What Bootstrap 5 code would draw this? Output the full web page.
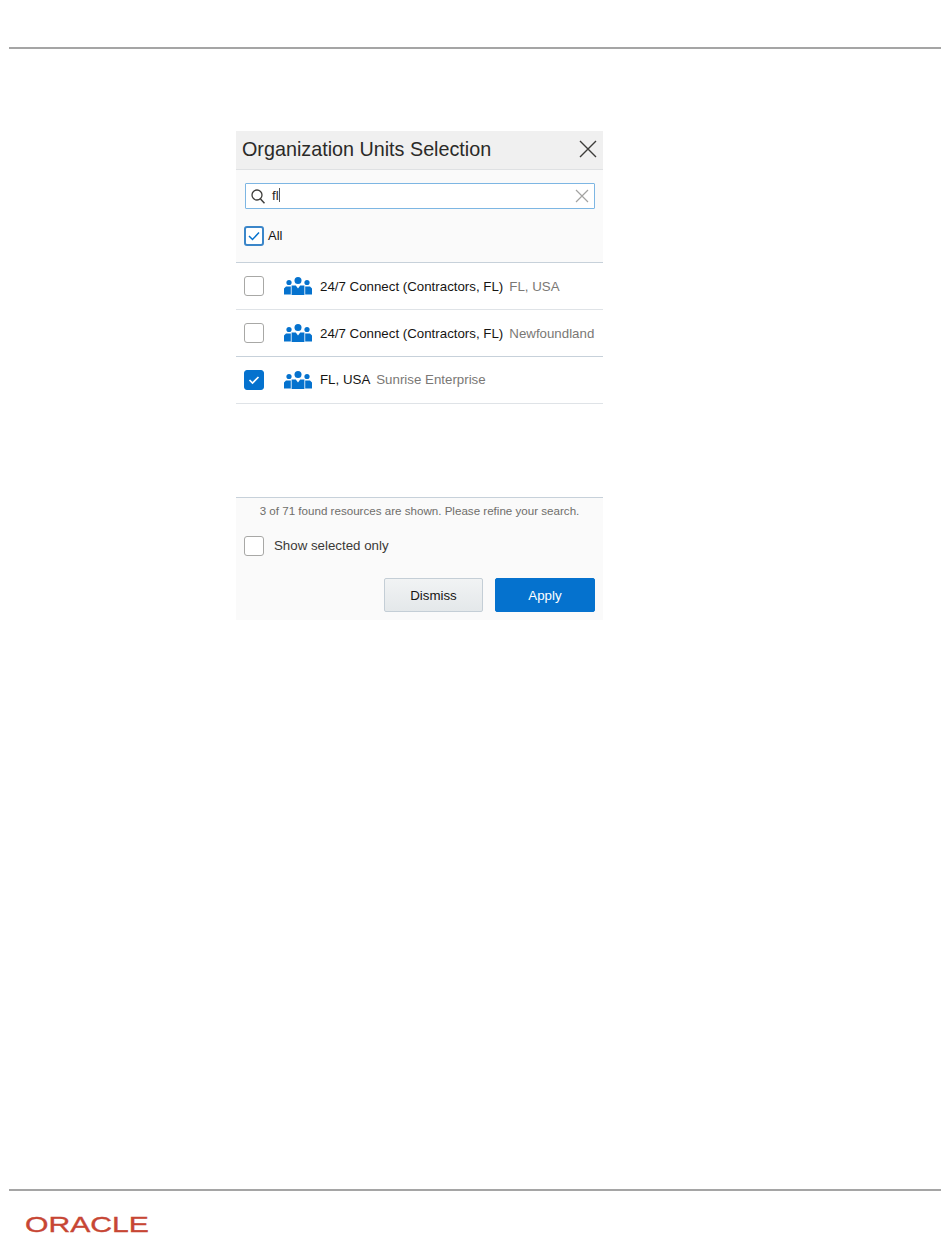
<!DOCTYPE html>
<html lang="en">
<head>
<meta charset="utf-8">
<title>Organization Units Selection</title>
<link href="https://cdn.jsdelivr.net/npm/bootstrap@5.3.0/dist/css/bootstrap.min.css" rel="stylesheet">
<style>
body{background:#fff;font-family:"Liberation Sans",Arial,sans-serif;color:#161513;height:1260px;overflow:hidden}
.pg{height:1260px;padding:47px 9px 0;display:flex;flex-direction:column}
.rule{height:2px;background:#a5a5a5;flex:none}
.pgmain{flex:none;height:1140px;padding:82px 0 0 227px}
.dlg{width:367px;height:489px;background:#fafafa;display:flex;flex-direction:column}
.dlghead{height:39px;background:#f0f0f0;border-bottom:1px solid #dfe1e3;padding:0 6px 2px;display:flex;align-items:center;justify-content:space-between;flex:none}
.dlgtitle{font-size:19.75px;color:#2b2a28;margin:0;font-weight:400;line-height:36px}
.srch{margin:13px 8px 0 9px;height:26px;border:1px solid #7db6e3;border-radius:1px;background:#fff;display:flex;align-items:center;padding:0 5px;flex:none}
.srchval{font-size:13.3px;flex:1;margin-left:7px;line-height:18px;color:#2b2a28}
.caret{display:inline-block;width:1px;height:14px;background:#555;vertical-align:-2px}
.chk{width:20px;height:20px;border:1px solid #a8a8a6;border-radius:3px;background:#fff;flex:none;display:flex;align-items:center;justify-content:center}
.chk-on{background:#0572ce;border-color:#0572ce}
.chk-foc{border:2px solid #3b86c9;background:#fff}
.allrow{margin:17px 0 0 8px;height:20px;display:flex;align-items:center;font-size:13px;gap:4px;flex:none;color:#161513}
.lst{margin-top:16px;border-top:1px solid #c7d1da;background:#fff;height:235px;flex:none}
.lrow{height:47px;display:flex;align-items:center;padding-left:8px;border-bottom:1px solid #dfe3e7;font-size:13.3px;white-space:nowrap}
.lrow.dark{border-bottom-color:#c7d1da}
.lrow svg.grp{margin-left:20px;margin-right:8px;flex:none}
.lbl-low{padding-top:1px}
.sub{color:#7a7875;margin-left:6px}
.foot{border-top:1px solid #c7d1da;flex:1;display:flex;flex-direction:column}
.found{font-size:11.6px;color:#6f6e6b;text-align:center;line-height:14px;margin-top:6px}
.selrow{margin:18px 0 0 8px;height:20px;display:flex;align-items:center;gap:10px;font-size:13.3px;color:#3a3937}
.acts{margin:22px 8px 0 0;display:flex;justify-content:flex-end;gap:12px}
.bt{height:34px;width:100px;border-radius:2px;font-size:13.3px;padding:1px 0 0;line-height:32px;font-family:inherit}
.bt-dis{background:linear-gradient(#f1f3f4,#e4e8ea);border:1px solid #c4ced6;color:#161513;width:99px}
.bt-app{background:#0572ce;border:1px solid #0572ce;color:#fff}
.brand{padding:20px 0 0 16px}
.brand svg{display:block}
</style>
</head>
<body>
<svg width="0" height="0" class="d-block position-absolute"><defs>
<symbol id="grp" viewBox="0 0 28 18">
<circle cx="14" cy="3.500" r="3.500" fill="#0572ce"/><circle cx="5" cy="5.500" r="2.600" fill="#0572ce"/><circle cx="23" cy="5.500" r="2.600" fill="#0572ce"/>
<path fill="#0572ce" d="M0 11.500 2 9.500h4.800v8H0zM28 11.500 26 9.500h-4.800v8H28zM7.600 8.500h4.200l2.200 3 2.200-3h4.200V18H7.600z"/>
</symbol></defs></svg>
<div class="pg">
<div class="rule"></div>
<div class="pgmain">
<div class="dlg">
<div class="dlghead">
<h1 class="dlgtitle">Organization Units Selection</h1>
<svg width="18" height="18" viewBox="0 0 18 18"><path d="M1 1l16 16M17 1L1 17" stroke="#3d3c3a" stroke-width="1.400" fill="none"/></svg>
</div>
<div class="srch">
<svg width="14" height="15" viewBox="0 0 14 15"><circle cx="6" cy="6" r="5" fill="none" stroke="#3d3c3a" stroke-width="1.300"/><path d="M9.500 10l4 4.300" stroke="#3d3c3a" stroke-width="1.500"/></svg>
<div class="srchval">fl<span class="caret"></span></div>
<svg width="14" height="14" viewBox="0 0 14 14"><path d="M1 1l12 12M13 1L1 13" stroke="#a3a3a1" stroke-width="1.200"/></svg>
</div>
<div class="allrow">
<span class="chk chk-foc"><svg width="12" height="10" viewBox="0 0 12 10"><path d="M1 5l3.500 3.500L11 1.500" fill="none" stroke="#0572ce" stroke-width="1.500"/></svg></span>
<span>All</span>
</div>
<div class="lst">
<div class="lrow"><span class="chk"></span><svg class="grp" width="28" height="18"><use href="#grp"/></svg><span class="lbl-low">24/7 Connect (Contractors, FL)</span><span class="sub lbl-low">FL, USA</span></div>
<div class="lrow dark"><span class="chk"></span><svg class="grp" width="28" height="18"><use href="#grp"/></svg><span class="lbl-low">24/7 Connect (Contractors, FL)</span><span class="sub lbl-low">Newfoundland</span></div>
<div class="lrow"><span class="chk chk-on"><svg width="12" height="10" viewBox="0 0 12 10"><path d="M1.500 5l3 3L10.500 2" fill="none" stroke="#fff" stroke-width="1.700"/></svg></span><svg class="grp" width="28" height="18"><use href="#grp"/></svg><span>FL, USA</span><span class="sub">Sunrise Enterprise</span></div>
</div>
<div class="foot">
<div class="found">3 of 71 found resources are shown. Please refine your search.</div>
<div class="selrow"><span class="chk"></span><span>Show selected only</span></div>
<div class="acts">
<button type="button" class="btn bt bt-dis">Dismiss</button>
<button type="button" class="btn bt bt-app">Apply</button>
</div>
</div>
</div>
</div>
<div class="rule"></div>
<div class="brand">
<svg width="128" height="30" viewBox="0 0 128 30"><text x="0" y="21" font-family="Liberation Sans" font-size="22" textLength="124" lengthAdjust="spacingAndGlyphs" fill="#c74634" stroke="#c74634" stroke-width=".35">ORACLE</text></svg>
</div>
</div>
</body>
</html>
